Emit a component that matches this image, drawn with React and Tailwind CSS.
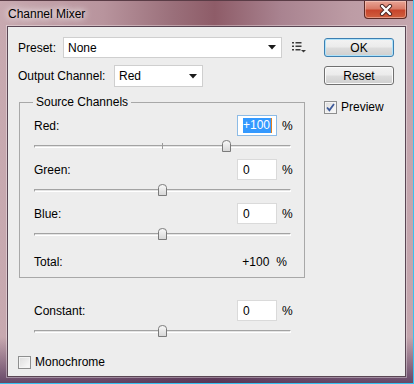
import React from "react";

const channels = [
  { name: "Red", value: 100, selected: true, tick: true },
  { name: "Green", value: 0 },
  { name: "Blue", value: 0 },
];

const Arrow = () => (
  <svg width="8" height="5" viewBox="0 0 8 5" className="shrink-0">
    <path d="M0 0 H8 L4 4.5 Z" fill="#1a1a1a" />
  </svg>
);

const Dropdown = ({ value, width }) => (
  <div
    className={`${width} h-full flex items-center bg-white border border-[#cfcfcf] pl-[4px] pr-[5px]`}
  >
    <span className="flex-1">{value}</span>
    <Arrow />
  </div>
);

const MenuIcon = () => (
  <svg width="14" height="11" viewBox="0 0 14 11" className="ml-[10px]">
    <g fill="#3a3a3a">
      <rect x="0" y="0" width="2" height="1.5" />
      <rect x="3.5" y="0" width="6" height="1.5" />
      <rect x="0" y="3.5" width="2" height="1.5" />
      <rect x="3.5" y="3.5" width="6" height="1.5" />
      <rect x="0" y="7" width="2" height="1.5" />
      <rect x="3.5" y="7" width="5" height="1.5" />
      <path d="M9 8 H14 L11.5 10.5 Z" />
    </g>
  </svg>
);

const Checkbox = ({ checked }) => (
  <div className="w-[13px] h-[13px] border border-[#8e8f8f] bg-[linear-gradient(135deg,#dcdcdc_0%,#fbfbfb_100%)] shadow-[inset_0_0_0_1px_#f4f4f4] flex items-center justify-center shrink-0">
    {checked && (
      <svg width="9" height="9" viewBox="0 0 9 9">
        <path
          d="M1 4.5 L3.4 7.2 L8 1"
          fill="none"
          stroke="#3d5a9a"
          strokeWidth="1.8"
        />
      </svg>
    )}
  </div>
);

const ValueBox = ({ value, selected }) => (
  <div
    className={`w-[40px] h-[21px] bg-white border flex items-center pl-[5px] ${
      selected ? "border-[#8cbbe6]" : "border-[#dadada]"
    }`}
  >
    {selected ? (
      <span className="flex items-center">
        <span className="bg-[#3399ff] text-white leading-[15px] pr-[1px]">
          {value}
        </span>
        <span className="w-[1px] h-[15px] bg-[#e0801f]" />
      </span>
    ) : (
      <span>{value}</span>
    )}
  </div>
);

const Slider = ({ value, tick }) => {
  const left = ((value + 200) / 400) * 257 - 4.5;
  return (
    <div className="relative w-[257px] h-[12px] mt-[4px]">
      <div className="absolute left-0 right-0 top-[5px] h-[3px] border-t border-l border-[#a3a3a3] border-b border-b-white border-r border-r-white bg-[#e4e4e4]" />
      {tick && (
        <div className="absolute left-[128px] top-[3px] w-[1px] h-[6px] bg-[#9a9a9a]" />
      )}
      <svg
        width="9"
        height="12"
        viewBox="0 0 9 12"
        className="absolute top-0"
        style={{ left }}
      >
        <defs>
          <linearGradient id="thumb" x1="0" y1="0" x2="0" y2="1">
            <stop offset="0" stopColor="#fafafa" />
            <stop offset="1" stopColor="#d6d6d6" />
          </linearGradient>
        </defs>
        <path
          d="M0.5 3.5 Q0.5 0.5 4.5 0.5 Q8.5 0.5 8.5 3.5 V11.5 H0.5 Z"
          fill="url(#thumb)"
          stroke="#7b7b7b"
        />
      </svg>
    </div>
  );
};

const ValueRow = ({ label, value, selected }) => (
  <div className="flex items-center h-[21px]">
    <span className="flex-1">{label}:</span>
    <ValueBox value={value > 0 ? `+${value}` : `${value}`} selected={selected} />
    <span className="ml-[5px] w-[22px]">%</span>
  </div>
);

const Button = ({ children, primary }) => (
  <div
    className={`h-[19px] rounded-[3px] border flex items-center justify-center bg-[linear-gradient(180deg,#f3f3f3_0%,#ebebeb_48%,#dddddd_52%,#cfcfcf_100%)] ${
      primary
        ? "border-[#3c7fb1] shadow-[inset_0_0_0_1px_#aee3fb]"
        : "border-[#707070] shadow-[inset_0_0_0_1px_#fbfbfb]"
    }`}
  >
    {children}
  </div>
);

export default function App() {
  return (
    <div className="w-[414px] h-[384px] flex flex-col overflow-hidden font-['Liberation_Sans',Arial,sans-serif] text-[12px] text-black border-b border-r border-b-[#36c2f0] border-r-[#36c2f0] bg-[linear-gradient(180deg,rgba(0,0,0,0)_88%,rgba(70,40,80,0.75)_100%),linear-gradient(90deg,#c8a9b0_0%,#b8949d_25%,#9a6f7a_42%,#8e5c68_52%,#a98390_68%,#bd9ca5_85%,#c4a6ae_100%)]">
      {/* title bar */}
      <div className="h-[26px] flex items-start shrink-0 border-t border-[#5a3c46]">
        <span className="pl-[8px] pt-[6px] leading-[14px] [text-shadow:0_0_6px_#fff,0_0_10px_#fff]">
          Channel Mixer
        </span>
        <div className="ml-auto mr-[6px] w-[43px] h-[18px] rounded-b-[4px] border border-t-0 border-[#5b2a25] bg-[linear-gradient(180deg,#e9a596_0%,#d97b68_45%,#c7452c_55%,#d0603f_100%)] shadow-[inset_0_0_0_1px_rgba(255,220,210,0.45)] flex items-center justify-center">
          <svg width="14" height="12" viewBox="0 0 14 12">
            <path
              d="M3 2 L11 10 M11 2 L3 10"
              stroke="#4a2422"
              strokeWidth="4.2"
              strokeLinecap="round"
            />
            <path
              d="M3 2 L11 10 M11 2 L3 10"
              stroke="#ffffff"
              strokeWidth="2.4"
              strokeLinecap="round"
            />
          </svg>
        </div>
      </div>

      {/* client area */}
      <div className="mx-[7px] h-[351px] border border-[#5a4654] bg-[#ededed] shadow-[0_0_0_1px_rgba(255,255,255,0.35)] flex pl-[10px] pt-[10px] gap-[18px]">
        <div className="w-[288px] flex flex-col">
          <div className="flex items-center h-[21px]">
            <span className="w-[45px]">Preset:</span>
            <Dropdown value="None" width="w-[219px]" />
            <MenuIcon />
          </div>
          <div className="flex items-center h-[22px] mt-[7px]">
            <span className="w-[96px]">Output Channel:</span>
            <Dropdown value="Red" width="w-[89px]" />
          </div>

          <fieldset className="ml-[1px] mt-[8px] w-[286px] h-[183px] border border-[#a8a8a8]">
            <legend className="ml-[13px] px-[3px] leading-[14px]">
              Source Channels
            </legend>
            <div className="pl-[14px] pt-[6px] flex flex-col">
              {channels.map((c, i) => (
                <div key={c.name} className={i > 0 ? "mt-[7px]" : ""}>
                  <ValueRow label={c.name} value={c.value} selected={c.selected} />
                  <Slider value={c.value} tick={c.tick} />
                </div>
              ))}
              <div className="flex items-center h-[14px] mt-[15px]">
                <span className="flex-1">Total:</span>
                <span>+100</span>
                <span className="ml-[7px] mr-[17px]">%</span>
              </div>
            </div>
          </fieldset>

          <div className="ml-[16px] w-[270px] mt-[22px]">
            <ValueRow label="Constant" value={0} />
            <Slider value={0} />
          </div>

          <div className="flex items-center mt-[16px]">
            <Checkbox />
            <span className="ml-[4px]">Monochrome</span>
          </div>
        </div>

        <div className="w-[70px] flex flex-col pt-[1px]">
          <Button primary>OK</Button>
          <div className="mt-[9px]">
            <Button>Reset</Button>
          </div>
          <div className="flex items-center mt-[13px]">
            <Checkbox checked />
            <span className="ml-[4px]">Preview</span>
          </div>
        </div>
      </div>
    </div>
  );
}
